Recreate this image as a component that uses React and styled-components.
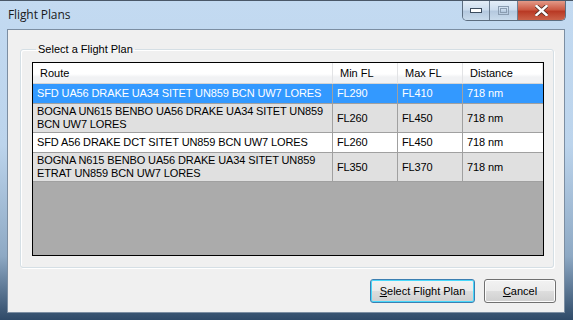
import styled, { createGlobalStyle } from 'styled-components';

const GlobalStyle = createGlobalStyle`
  html, body {
    margin: 0;
    padding: 0;
    background: #1b2f45;
  }
  body {
    font-family: "Liberation Sans", Arial, sans-serif;
  }
`;

const Window = styled.div`
  width: 573px;
  height: 320px;
  box-sizing: border-box;
  display: flex;
  flex-direction: column;
  background: linear-gradient(180deg, #c3daf1 0%, #bcd4ec 45%, #8ea9c4 80%, #2f4a68 100%);
  border-top: 1px solid #4a5868;
  overflow: hidden;
`;

const TitleBar = styled.div`
  height: 28px;
  display: flex;
  justify-content: space-between;
  align-items: flex-start;
  padding: 0 7px 0 8px;
  flex-shrink: 0;
`;

const Title = styled.div`
  font-family: "Open Sans", "DejaVu Sans", sans-serif;
  font-size: 12px;
  color: #1a1a1a;
  line-height: 14px;
  margin-top: 7px;
  letter-spacing: -0.1px;
`;

const Controls = styled.div`
  display: flex;
  height: 19px;
  border: 1px solid #5c6d80;
  border-top: none;
  border-radius: 0 0 5px 5px;
  overflow: hidden;
`;

const CtrlButton = styled.div`
  width: ${p => p.$w}px;
  height: 100%;
  display: flex;
  align-items: center;
  justify-content: center;
  background: ${p => p.$close
    ? 'linear-gradient(180deg, #e39a88 0%, #cc5a44 45%, #b93a25 55%, #cb6249 100%)'
    : 'linear-gradient(180deg, #e3edf7 0%, #cdddee 45%, #b5c9df 55%, #c9dbec 100%)'};
  border-left: ${p => p.$first ? 'none' : '1px solid #6c7d90'};
`;

const Client = styled.div`
  flex: 1;
  margin: 0 8px 7px 7px;
  background: #f0f0f0;
  border: 1px solid #7c8ea2;
  display: flex;
  flex-direction: column;
`;

const GroupBox = styled.fieldset`
  margin: 13px 10px 0 12px;
  padding: 6px 9px 10px 11px;
  border: 1px solid #d5dfe5;
  border-radius: 3px;
  box-shadow: inset 1px 1px 0 #fff, 1px 1px 0 #fff;
  height: 225px;
  box-sizing: border-box;
  min-width: 0;
`;

const Legend = styled.legend`
  font-size: 11px;
  line-height: 13px;
  color: #000;
  padding: 0 2px;
  margin-left: 4px;
`;

const Grid = styled.div`
  height: 194px;
  box-sizing: border-box;
  border: 1px solid #000;
  background: #ababab;
  display: grid;
  grid-template-columns: 300px 65px 65px 1fr;
  align-content: start;
`;

const HeadCell = styled.div`
  height: 21px;
  box-sizing: border-box;
  padding: 0 7px;
  display: flex;
  align-items: center;
  font-size: 11px;
  color: #000;
  background: linear-gradient(180deg, #ffffff 0%, #ffffff 55%, #f1f2f4 70%, #f1f2f4 100%);
  border-right: 1px solid #e2e3e5;
  border-bottom: 1px solid #d5d5d5;
`;

const Cell = styled.div`
  box-sizing: border-box;
  height: ${p => p.$tall ? 29 : 20}px;
  padding: 0 3px 0 4px;
  display: flex;
  align-items: center;
  font-size: 11px;
  line-height: 13px;
  letter-spacing: -0.12px;
  color: ${p => p.$selected ? '#fff' : '#000'};
  background: ${p => p.$selected ? '#3399ff' : p.$alt ? '#e0e0e0' : '#ffffff'};
  border-right: 1px solid #a0a0a0;
  border-bottom: 1px solid #a0a0a0;
  &:nth-child(4n) {
    border-right: none;
  }
`;

const Footer = styled.div`
  display: flex;
  justify-content: flex-end;
  gap: 9px;
  padding: 11px 8px 0 0;
`;

const Button = styled.button`
  width: ${p => p.$w}px;
  height: 24px;
  box-sizing: border-box;
  font-family: "Liberation Sans", Arial, sans-serif;
  font-size: 11px;
  color: #000;
  border-radius: 3px;
  border: 1px solid ${p => p.$default ? '#3c7fb1' : '#707070'};
  background: linear-gradient(180deg, #f2f2f2 0%, #ebebeb 48%, #dddddd 52%, #cfcfcf 100%);
  box-shadow: ${p => p.$default ? 'inset 0 0 0 1px #48d8fb' : 'inset 0 0 0 1px #fcfcfc'};
  padding: 0;
  u { text-decoration: underline; }
`;

const rows = [
  { route: 'SFD UA56 DRAKE UA34 SITET UN859 BCN UW7 LORES', min: 'FL290', max: 'FL410', dist: '718 nm', selected: true },
  { route: 'BOGNA UN615 BENBO UA56 DRAKE UA34 SITET UN859 BCN UW7 LORES', min: 'FL260', max: 'FL450', dist: '718 nm', tall: true, alt: true },
  { route: 'SFD A56 DRAKE DCT SITET UN859 BCN UW7 LORES', min: 'FL260', max: 'FL450', dist: '718 nm' },
  { route: 'BOGNA N615 BENBO UA56 DRAKE UA34 SITET UN859 ETRAT UN859 BCN UW7 LORES', min: 'FL350', max: 'FL370', dist: '718 nm', tall: true, alt: true },
];

function MinIcon() {
  return (
    <svg width="12" height="5" viewBox="0 0 12 5">
      <rect x="0.5" y="0.5" width="11" height="4" fill="#fff" stroke="#3c4c5e" />
    </svg>
  );
}

function MaxIcon() {
  return (
    <svg width="11" height="9" viewBox="0 0 11 9">
      <rect x="0.5" y="0.5" width="10" height="8" fill="none" stroke="#8a9cb0" />
      <rect x="2.5" y="2.5" width="6" height="4" fill="none" stroke="#8a9cb0" />
    </svg>
  );
}

function CloseIcon() {
  return (
    <svg width="13" height="11" viewBox="0 0 13 11">
      <path d="M1.5 1 L11.5 10 M11.5 1 L1.5 10" stroke="#4a2a22" strokeWidth="4" strokeLinecap="square" />
      <path d="M1.5 1 L11.5 10 M11.5 1 L1.5 10" stroke="#fff" strokeWidth="2.4" strokeLinecap="square" />
    </svg>
  );
}

export default function App() {
  return (
    <>
      <GlobalStyle />
      <Window>
        <TitleBar>
          <Title>Flight Plans</Title>
          <Controls>
            <CtrlButton $w={26} $first><MinIcon /></CtrlButton>
            <CtrlButton $w={27}><MaxIcon /></CtrlButton>
            <CtrlButton $w={47} $close><CloseIcon /></CtrlButton>
          </Controls>
        </TitleBar>
        <Client>
          <GroupBox>
            <Legend>Select a Flight Plan</Legend>
            <Grid>
              <HeadCell>Route</HeadCell>
              <HeadCell>Min FL</HeadCell>
              <HeadCell>Max FL</HeadCell>
              <HeadCell>Distance</HeadCell>
              {rows.map((r, i) => [r.route, r.min, r.max, r.dist].map((v, j) => (
                <Cell key={`${i}-${j}`} $selected={r.selected} $alt={r.alt} $tall={r.tall}>{v}</Cell>
              )))}
            </Grid>
          </GroupBox>
          <Footer>
            <Button $w={105} $default><u>S</u>elect Flight Plan</Button>
            <Button $w={72}><u>C</u>ancel</Button>
          </Footer>
        </Client>
      </Window>
    </>
  );
}
